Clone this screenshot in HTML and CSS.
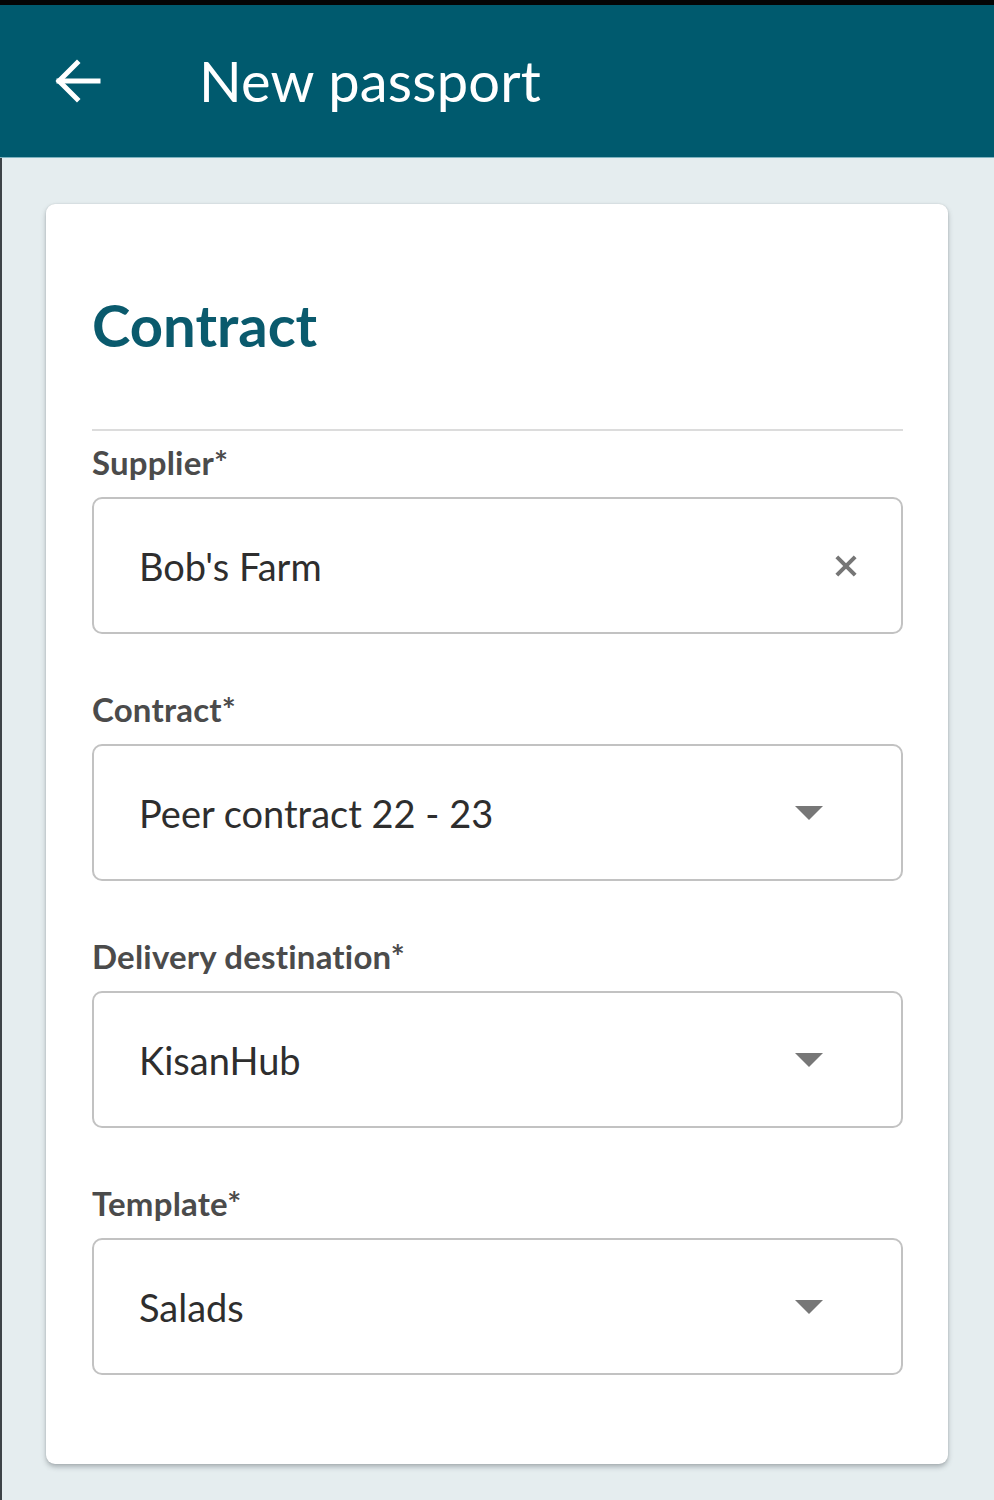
FILE: index.html
```html
<!DOCTYPE html>
<html lang="en">
<head>
<meta charset="utf-8">
<title>New passport</title>
<link rel="stylesheet" href="styles.css">
</head>
<body>
<div class="status"></div>
<header class="appbar">
  <button class="back" aria-label="Back">
    <svg width="50" height="46" viewBox="0 0 50 46" fill="none" stroke="#fff" stroke-width="5" stroke-linecap="square" stroke-linejoin="miter">
      <path d="M6 23 H45"/>
      <path d="M24 5 L6 23 L24 41"/>
    </svg>
  </button>
  <h1 class="title">New passport</h1>
</header>
<main class="page">
  <section class="card">
    <h2 class="heading">Contract</h2>
    <hr class="divider">
    <div class="field">
      <label class="label">Supplier*</label>
      <div class="box">
        <span class="value">Bob's Farm</span>
        <svg class="clear" width="24" height="24" viewBox="0 0 24 24" stroke="#767676" stroke-width="4.4" stroke-linecap="butt">
          <path d="M2 2 L22 22 M22 2 L2 22"/>
        </svg>
      </div>
    </div>
    <div class="field">
      <label class="label">Contract*</label>
      <div class="box select">
        <span class="value">Peer contract 22 - 23</span>
        <span class="caret"></span>
      </div>
    </div>
    <div class="field">
      <label class="label">Delivery destination*</label>
      <div class="box select">
        <span class="value">KisanHub</span>
        <span class="caret"></span>
      </div>
    </div>
    <div class="field last">
      <label class="label">Template*</label>
      <div class="box select">
        <span class="value">Salads</span>
        <span class="caret"></span>
      </div>
    </div>
  </section>
</main>
</body>
</html>
```

FILE: styles.css
```css
* { box-sizing: border-box; }
html, body {
  margin: 0;
  padding: 0;
}
body {
  width: 994px;
  min-height: 1500px;
  background: #e5edef;
  font-family: Lato, "Open Sans", "Liberation Sans", sans-serif;
}
.status {
  height: 5px;
  background: #050505;
}
.appbar {
  height: 153px;
  background: #005a6e;
  display: flex;
  align-items: center;
  padding-left: 53px;
  border-bottom: 1px solid #7fb3c0;
}
.back {
  background: none;
  border: 0;
  padding: 0;
  margin: 0;
  width: 50px;
  height: 46px;
  display: flex;
}
.title {
  margin: 0 0 0 96px;
  color: #ffffff;
  font-weight: 400;
  font-size: 56px;
  line-height: 62px;
  letter-spacing: 0.2px;
}
.page {
  padding: 46px 46px 40px 44px;
  border-left: 2px solid #3d4347;
}
.card {
  background: #fff;
  border-radius: 9px;
  box-shadow: 0 3px 5px rgba(60, 70, 75, 0.35), 0 0 2px rgba(0, 0, 0, 0.12);
  padding: 86px 45px 89px 46px;
}
.heading {
  margin: 0;
  color: #0a5a6d;
  font-weight: 700;
  font-size: 58px;
  line-height: 70px;
}
.divider {
  border: 0;
  height: 2px;
  background: #dcdcdc;
  margin: 69px 0 11px 0;
}
.field {
  margin-bottom: 55px;
}
.field.last { margin-bottom: 0; }
.label {
  display: block;
  color: #4b4b4b;
  font-weight: 700;
  font-size: 33px;
  line-height: 40px;
  letter-spacing: 0.2px;
  margin-bottom: 15px;
}
.box {
  height: 137px;
  border: 2px solid #c2c2c2;
  border-radius: 10px;
  display: flex;
  align-items: center;
  padding: 0 44px 0 45px;
}
.box.select {
  padding-right: 78px;
}
.value {
  flex: 1;
  color: #2e2e2e;
  font-size: 38px;
  line-height: 46px;
  font-weight: 400;
}
.clear {
  width: 22px;
  height: 22px;
  flex: none;
}
.caret {
  flex: none;
  width: 0;
  height: 0;
  border-left: 14px solid transparent;
  border-right: 14px solid transparent;
  border-top: 14px solid #777;
}
```
